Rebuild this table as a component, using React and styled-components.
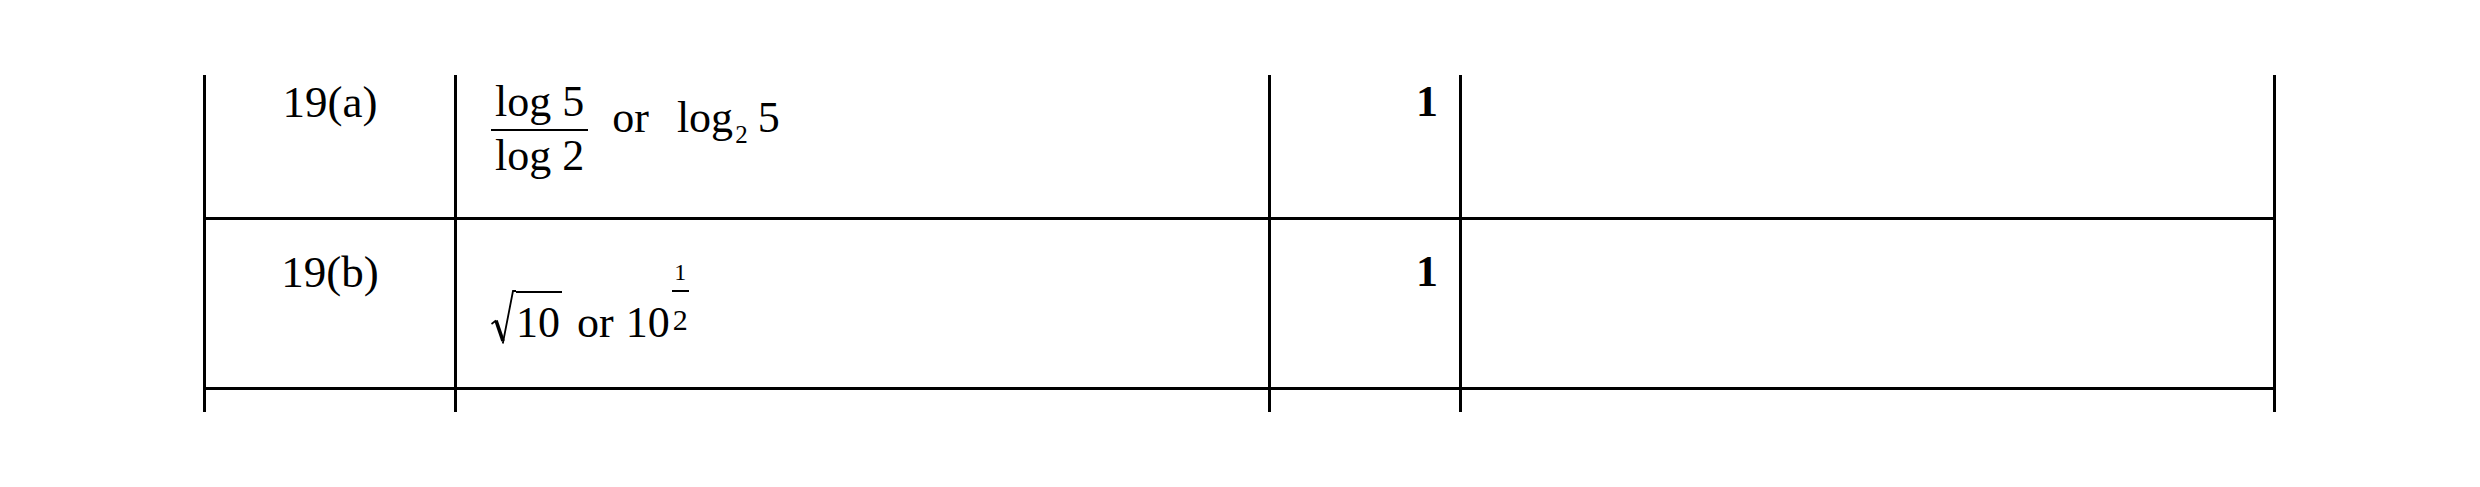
import React from 'react';
import styled, { createGlobalStyle } from 'styled-components';

const Global = createGlobalStyle`
  html, body { margin: 0; padding: 0; background: #fff; }
  body {
    font-family: "Liberation Serif", "Times New Roman", serif;
    color: #000;
  }
`;

const Page = styled.div`
  width: 2480px;
  height: 487px;
  box-sizing: border-box;
  padding: 75px 0 0 203px;
  background: #fff;
`;

const Table = styled.div`
  display: flex;
  flex-direction: column;
  width: 2073px;
`;

const Row = styled.div`
  display: grid;
  grid-template-columns: 251px 814px 191px 817px;
  height: ${(p) => p.$h}px;
  box-sizing: border-box;
  border-bottom: ${(p) => (p.$ruled ? '3px solid #000' : 'none')};
`;

const Cell = styled.div`
  box-sizing: border-box;
  border-left: 3px solid #000;
  font-size: 44px;
  line-height: 44px;
  padding-top: ${(p) => p.$top || 0}px;
  white-space: nowrap;
`;

const LabelCell = styled(Cell)`
  text-align: center;
  font-size: 45px;
`;

const MathCell = styled(Cell)`
  padding-left: 34px;
`;

const MarkCell = styled(Cell)`
  text-align: right;
  font-weight: 700;
  padding-right: 21px;
`;

const BlankCell = styled(Cell)`
  border-right: 3px solid #000;
`;

const Frac = styled.span`
  display: inline-flex;
  flex-direction: column;
  align-items: center;
  vertical-align: ${(p) => p.$raise}px;
  margin-left: ${(p) => p.$ml || 0}px;
  font-size: ${(p) => p.$size}px;
  line-height: ${(p) => p.$size}px;
`;

const FracPart = styled.span`
  display: block;
  padding: 0 ${(p) => p.$pad || 0}px;
  font-size: ${(p) => (p.$size ? `${p.$size}px` : 'inherit')};
  line-height: ${(p) => (p.$size ? `${p.$size}px` : 'inherit')};
`;

const FracBar = styled.span`
  display: block;
  align-self: stretch;
  height: 2px;
  background: #000;
  margin: ${(p) => p.$above}px 0 ${(p) => p.$below}px;
`;

const Word = styled.span`
  display: inline-block;
  margin-left: ${(p) => p.$ml || 0}px;
  margin-right: ${(p) => p.$mr || 0}px;
`;

const Sub = styled.span`
  font-size: 25px;
  vertical-align: -11px;
  line-height: 0;
  margin: 0 10px 0 2px;
`;

const RadicalSign = styled.svg`
  display: inline-block;
  vertical-align: -8px;
  width: 25px;
  height: 55px;
`;

const Radicand = styled.span`
  display: inline-block;
  border-top: 2px solid #000;
  padding: 8px 2px 0 0;
  line-height: 44px;
`;

const Radical = ({ children }) => (
  <>
    <RadicalSign viewBox="0 0 25 55">
      <path d="M0.5 34 L5 30.5" stroke="#000" strokeWidth="1.6" fill="none" />
      <path d="M5 30.5 L12 51" stroke="#000" strokeWidth="3.6" fill="none" />
      <path d="M11.8 53.5 L22 1 L25 1" stroke="#000" strokeWidth="1.8" fill="none" />
    </RadicalSign>
    <Radicand>{children}</Radicand>
  </>
);

const rows = [
  { label: '19(a)', mark: '1', h: 145, ruled: true, top: 5, mathTop: 5, math: 'a' },
  { label: '19(b)', mark: '1', h: 170, ruled: true, top: 30, mathTop: 40, math: 'b' },
  { label: '', mark: '', h: 22, ruled: false, top: 0, mathTop: 0, math: null },
];

const MathA = () => (
  <>
    <Frac $raise={16} $size={44}>
      <FracPart $pad={4}>log 5</FracPart>
      <FracBar $above={5} $below={3} />
      <FracPart $pad={4}>log 2</FracPart>
    </Frac>
    <Word $ml={24} $mr={28}>or</Word>
    log<Sub>2</Sub>5
  </>
);

const MathB = () => (
  <>
    <Radical>10</Radical>
    <Word $ml={15} $mr={12}>or</Word>
    10
    <Frac $raise={57} $size={24} $ml={2}>
      <FracPart $pad={1}>1</FracPart>
      <FracBar $above={6} $below={13} />
      <FracPart $pad={1} $size={30}>2</FracPart>
    </Frac>
  </>
);

export default function App() {
  return (
    <>
      <Global />
      <Page>
        <Table>
          {rows.map((r, i) => (
            <Row key={i} $h={r.h} $ruled={r.ruled}>
              <LabelCell $top={r.top}>{r.label}</LabelCell>
              <MathCell $top={r.mathTop}>
                {r.math === 'a' && <MathA />}
                {r.math === 'b' && <MathB />}
              </MathCell>
              <MarkCell $top={r.top}>{r.mark}</MarkCell>
              <BlankCell />
            </Row>
          ))}
        </Table>
      </Page>
    </>
  );
}
